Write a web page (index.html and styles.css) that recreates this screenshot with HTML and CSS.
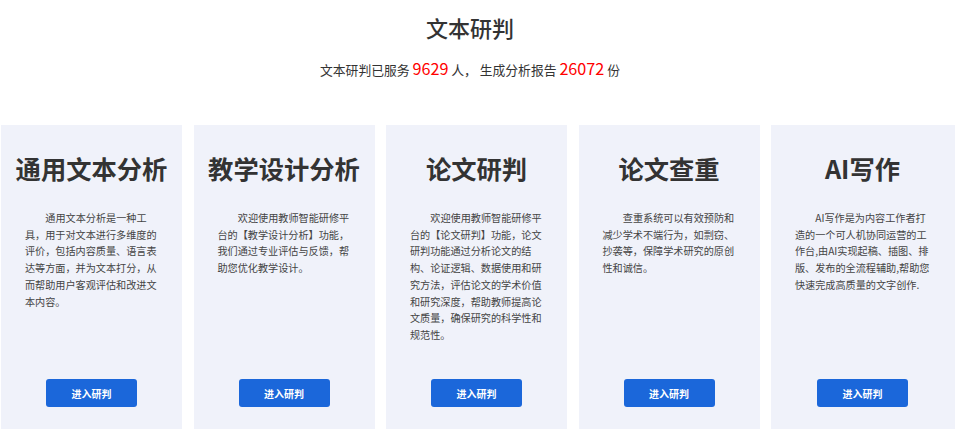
FILE: index.html
```html
<!DOCTYPE html>
<html lang="zh-CN">
<head>
  <meta charset="UTF-8">
  <title>文本研判</title>
  <link rel="stylesheet" href="styles.css">
</head>
<body>
  <div class="header">
    <h1>文本研判</h1>
    <p class="stats">文本研判已服务 <span class="num">9629</span> 人， 生成分析报告 <span class="num">26072</span> 份</p>
  </div>

  <div class="card-row">
    <div class="card">
      <h2>通用文本分析</h2>
      <p class="desc">通用文本分析是一种工具，用于对文本进行多维度的评价，包括内容质量、语言表达等方面，并为文本打分，从而帮助用户客观评估和改进文本内容。</p>
      <button>进入研判</button>
    </div>
    <div class="card">
      <h2>教学设计分析</h2>
      <p class="desc">欢迎使用教师智能研修平台的【教学设计分析】功能，我们通过专业评估与反馈，帮助您优化教学设计。</p>
      <button>进入研判</button>
    </div>
    <div class="card">
      <h2>论文研判</h2>
      <p class="desc">欢迎使用教师智能研修平台的【论文研判】功能，论文研判功能通过分析论文的结构、论证逻辑、数据使用和研究方法，评估论文的学术价值和研究深度，帮助教师提高论文质量，确保研究的科学性和规范性。</p>
      <button>进入研判</button>
    </div>
    <div class="card">
      <h2>论文查重</h2>
      <p class="desc">查重系统可以有效预防和减少学术不端行为，如剽窃、抄袭等，保障学术研究的原创性和诚信。</p>
      <button>进入研判</button>
    </div>
    <div class="card">
      <h2>AI写作</h2>
      <p class="desc">AI写作是为内容工作者打造的一个可人机协同运营的工作台,由AI实现起稿、插图、排版、发布的全流程辅助,帮助您快速完成高质量的文字创作.</p>
      <button>进入研判</button>
    </div>
  </div>
</body>
</html>
```

FILE: styles.css
```css
html, body {
  margin: 0;
  padding: 0;
  height: 100%;
  overflow: hidden;
  font-family: "Noto Sans CJK SC", "Noto Sans", sans-serif;
  background: #ffffff;
  color: #333;
}
.header {
  padding: 12px 15px 0 0;
  text-align: center;
}
.header h1 {
  margin: 0;
  font-size: 22px;
  line-height: 30px;
  font-weight: 500;
  color: #333;
}
.stats {
  margin: 14px 0 0;
  font-size: 12.8px;
  line-height: 24px;
  color: #333;
}
.stats .num {
  font-size: 16.2px;
  color: #ff0000;
}
.card-row {
  display: flex;
  gap: 11.5px;
  padding-left: 1px;
  margin-top: 43px;
}
.card {
  flex: none;
  width: 181px;
  height: 304px;
  box-sizing: border-box;
  display: flex;
  flex-direction: column;
  align-items: center;
  padding: 24px 24px 22px;
  background: #f0f2fa;
}
.card:last-child {
  width: 184px;
  padding-right: 25px;
}
.card h2 {
  margin: 0;
  font-size: 25.3px;
  line-height: 38px;
  font-weight: 700;
  color: #333;
  white-space: nowrap;
}
.desc {
  flex: 1;
  align-self: stretch;
  margin: 23px 0 0;
  font-size: 10.15px;
  line-height: 16.7px;
  text-indent: 2em;
  color: #444;
}
button {
  width: 91px;
  height: 28px;
  padding: 0;
  font-family: inherit;
  font-size: 10px;
  font-weight: 700;
  color: #fff;
  background: #1b67da;
  border: none;
  border-radius: 3px;
  cursor: pointer;
}
button:hover { background: #1556b8; }
```
